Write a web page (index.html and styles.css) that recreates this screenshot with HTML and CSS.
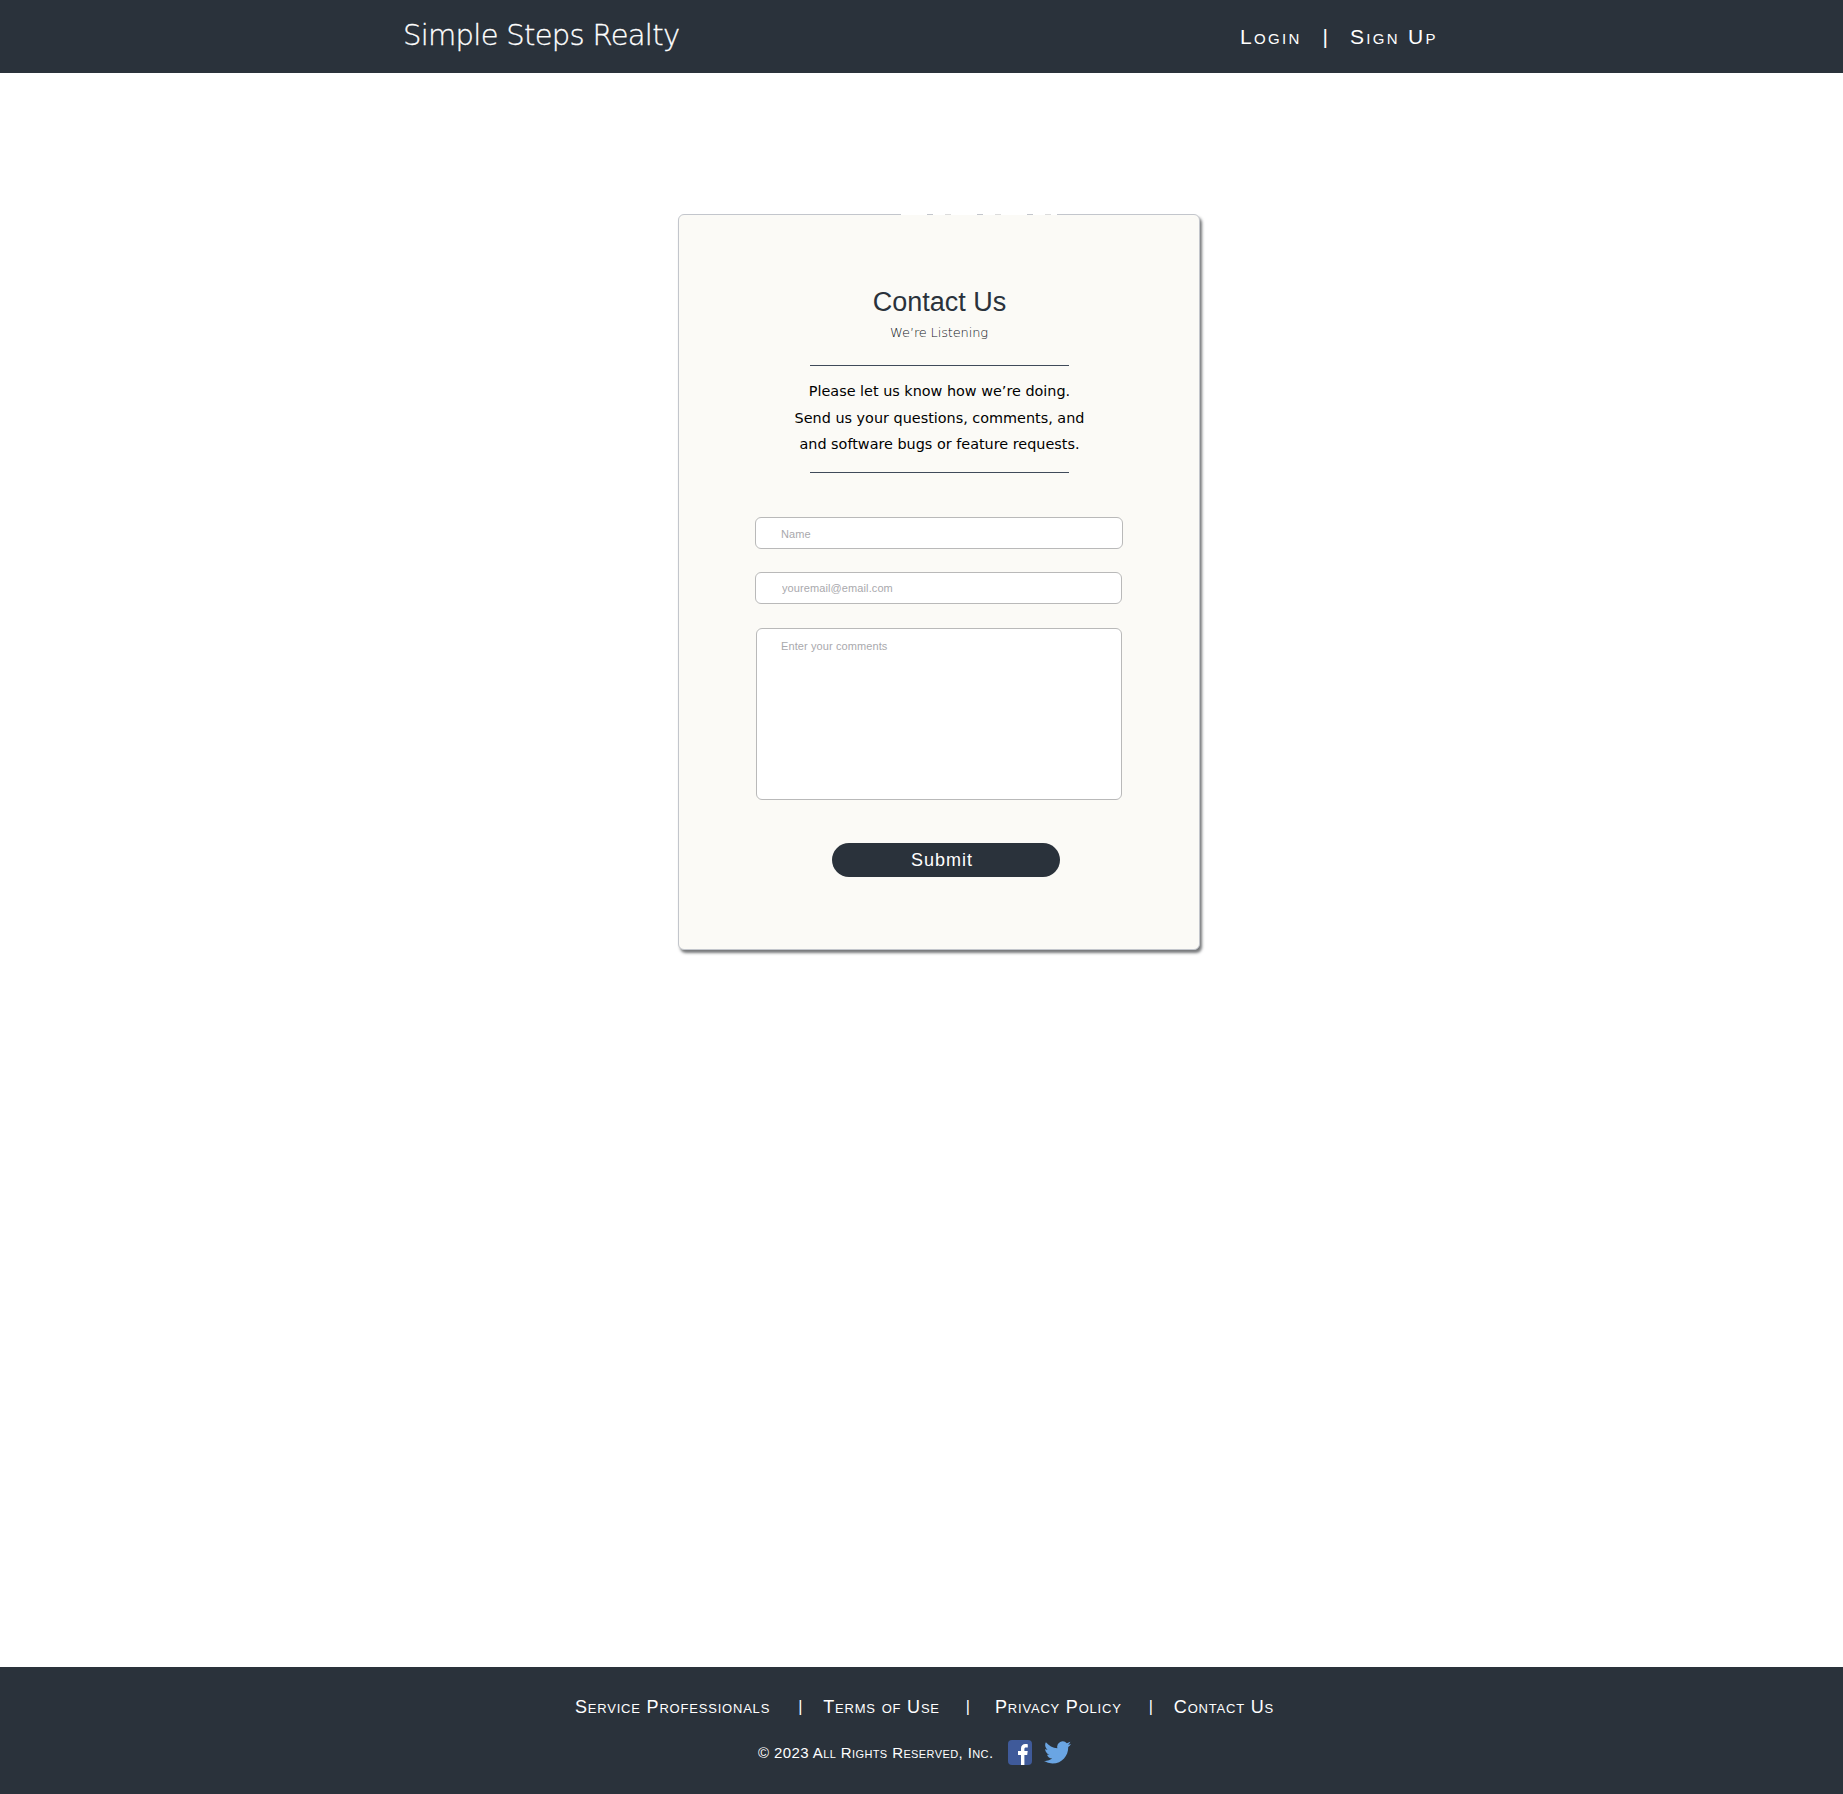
FILE: index.html
```html
<!DOCTYPE html>
<html lang="en">
<head>
<meta charset="utf-8">
<title>Contact Us - Simple Steps Realty</title>
<link rel="stylesheet" href="styles.css">
</head>
<body>
<header class="site-header">
  <a class="logo" href="#">Simple Steps Realty</a>
  <nav class="top-nav">
    <a href="#">Login</a>
    <span class="sep">|</span>
    <a href="#">Sign Up</a>
  </nav>
</header>
<main class="content">
  <section class="card">
    <span class="card-nick"></span>
    <h1 class="title">Contact Us</h1>
    <p class="subtitle">We’re Listening</p>
    <div class="intro">
      <p>Please let us know how we’re doing.</p>
      <p>Send us your questions, comments, and</p>
      <p>and software bugs or feature requests.</p>
    </div>
    <form class="form">
      <input class="field" type="text" placeholder="Name">
      <input class="field field-email" type="email" placeholder="youremail@email.com">
      <textarea class="field field-comments" placeholder="Enter your comments"></textarea>
      <button class="submit" type="button">Submit</button>
    </form>
  </section>
</main>
<footer class="site-footer">
  <nav class="foot-nav">
    <a href="#">Service Professionals</a>
    <span class="sep sep-a">|</span>
    <a href="#">Terms of Use</a>
    <span class="sep sep-b">|</span>
    <a href="#">Privacy Policy</a>
    <span class="sep sep-c">|</span>
    <a href="#">Contact Us</a>
  </nav>
  <div class="foot-legal">
    <span class="copy">© 2023 All Rights Reserved, Inc.</span>
    <svg class="icon-fb" width="24" height="25" viewBox="0 0 24 25" aria-label="Facebook">
      <rect width="24" height="25" rx="4" fill="#3f5a9a"/>
      <path d="M13 25v-10h-3v-4h3V8.500C13 5.500 14.800 4 17.300 4c1.200 0 2.200.1 2.500.2v3.300h-1.700c-1.400 0-1.700.7-1.700 1.600V11h3.300l-.5 4h-2.800v10z" fill="#fff"/>
    </svg>
    <svg class="icon-tw" width="27" height="23" viewBox="0 0 24 20" aria-label="Twitter">
      <path d="M24 2.400c-.9.400-1.800.7-2.800.8 1-.6 1.800-1.600 2.200-2.700-.9.600-2 1-3.100 1.200A4.900 4.900 0 0 0 11.900 6.200C7.800 6 4.200 4 1.700.9c-1.300 2.200-.7 5.100 1.500 6.600-.8 0-1.600-.2-2.200-.6 0 2.400 1.700 4.500 3.900 5-.7.200-1.500.2-2.200.1.600 2 2.400 3.400 4.600 3.400A9.900 9.900 0 0 1 0 17.500 13.900 13.900 0 0 0 7.500 19.700c9.100 0 14.300-7.700 14-14.600 1-.7 1.800-1.600 2.500-2.700z" fill="#6aa5e3"/>
    </svg>
  </div>
</footer>
</body>
</html>
```
FILE: styles.css
```css
* { box-sizing: border-box; }
html, body { margin: 0; padding: 0; }
body {
  min-height: 1794px;
  display: flex;
  flex-direction: column;
  background: #fff;
  font-family: "Liberation Sans", Arial, sans-serif;
}
a { color: inherit; text-decoration: none; }
p { margin: 0; }

.site-header {
  height: 73px;
  flex: none;
  background: #2a323b;
  color: #fff;
  display: flex;
  align-items: center;
  padding-left: 403px;
}
.logo {
  flex: none;
  width: 275px;
  font-family: "DejaVu Sans", sans-serif;
  font-size: 29px;
  font-weight: 200;
  letter-spacing: -.7px;
  -webkit-text-stroke: .3px #fff;
  line-height: 1;
  margin-top: -3px;
  white-space: nowrap;
}
.top-nav {
  margin-left: 562px;
  display: flex;
  align-items: center;
  font-size: 21px;
  font-variant: small-caps;
  letter-spacing: 2.3px;
  margin-top: 1px;
}
.top-nav .sep { margin: 0 22px 0 21px; font-variant: normal; letter-spacing: 0; }

.content { flex: 1; padding: 141px 0 0 678px; }
.card {
  position: relative;
  width: 522px;
  height: 736px;
  background: #fbfaf6;
  border: 1px solid #c3c6cc;
  border-radius: 6px;
  box-shadow: 2px 3px 3px #77797b;
  display: flex;
  flex-direction: column;
  align-items: center;
}
.card-nick {
  position: absolute;
  top: -1px;
  left: 222px;
  width: 156px;
  height: 1px;
  background: repeating-linear-gradient(90deg, #fff 0 26px, #c3c6cc 26px 32px, #fff 32px 44px, #dcdcdc 44px 50px);
}
.title {
  margin: 72px 0 0 1px;
  font-size: 27px;
  line-height: 30px;
  font-weight: 400;
  color: #2a323b;
}
.subtitle {
  margin-top: 7px;
  font-family: "DejaVu Sans", sans-serif;
  font-size: 13px;
  font-weight: 200;
  letter-spacing: -.15px;
  line-height: 18px;
  color: #11161c;
}
.intro {
  width: 259px;
  margin: 23px 0 0 1px;
  padding: 12px 0 14px;
  border-top: 1px solid #3f4a5a;
  border-bottom: 1px solid #3f4a5a;
  display: flex;
  flex-direction: column;
  align-items: center;
  white-space: nowrap;
  font-family: "DejaVu Sans", sans-serif;
  font-size: 14.400px;
  line-height: 26.700px;
  color: #000;
}
.form {
  width: 368px;
  margin-top: 44px;
  display: flex;
  flex-direction: column;
  align-items: center;
}
.field {
  display: block;
  width: 368px;
  height: 32px;
  padding: 2px 0 0 25px;
  background: #fff;
  border: 1px solid #b9b9b9;
  border-radius: 6px;
  font-family: "Liberation Sans", Arial, sans-serif;
  font-size: 11px;
  letter-spacing: .1px;
  outline: none;
  resize: none;
}
.field::placeholder { color: #a9a9ad; opacity: 1; }
.field-email { width: 367px; margin: 23px 0 0 -1px; padding: 0 0 0 26px; }
.field-comments {
  width: 366px;
  height: 172px;
  margin: 24px 0 0 0;
  padding: 11px 0 0 24px;
  line-height: 13px;
  overflow: hidden;
}
.submit {
  width: 228px;
  height: 34px;
  margin: 43px 0 0 14px;
  background: #2a323b;
  color: #fff;
  border: 0;
  border-radius: 17px;
  font-family: "Liberation Sans", Arial, sans-serif;
  font-size: 18px;
  letter-spacing: 1px;
  padding: 0 8px 0 0;
}

.site-footer {
  height: 127px;
  flex: none;
  background: #2a323b;
  color: #fff;
  display: flex;
  flex-direction: column;
  padding: 28px 0 0 575px;
}
.foot-nav {
  display: flex;
  align-items: center;
  font-size: 18px;
  font-variant: small-caps;
  letter-spacing: .8px;
  line-height: 24px;
  white-space: nowrap;
}
.foot-nav .sep { font-variant: normal; font-size: 16px; letter-spacing: 0; }
.sep-a { margin: 0 21px 0 28px; }
.sep-b { margin: 0 25px 0 26px; }
.sep-c { margin: 0 21px 0 27px; }
.foot-legal {
  display: flex;
  align-items: center;
  margin: 21px 0 0 183px;
}
.copy {
  font-size: 15px;
  font-variant: small-caps;
  letter-spacing: .4px;
  white-space: nowrap;
}
.icon-fb { margin-left: 14px; flex: none; }
.icon-tw { margin-left: 12px; flex: none; }
```
